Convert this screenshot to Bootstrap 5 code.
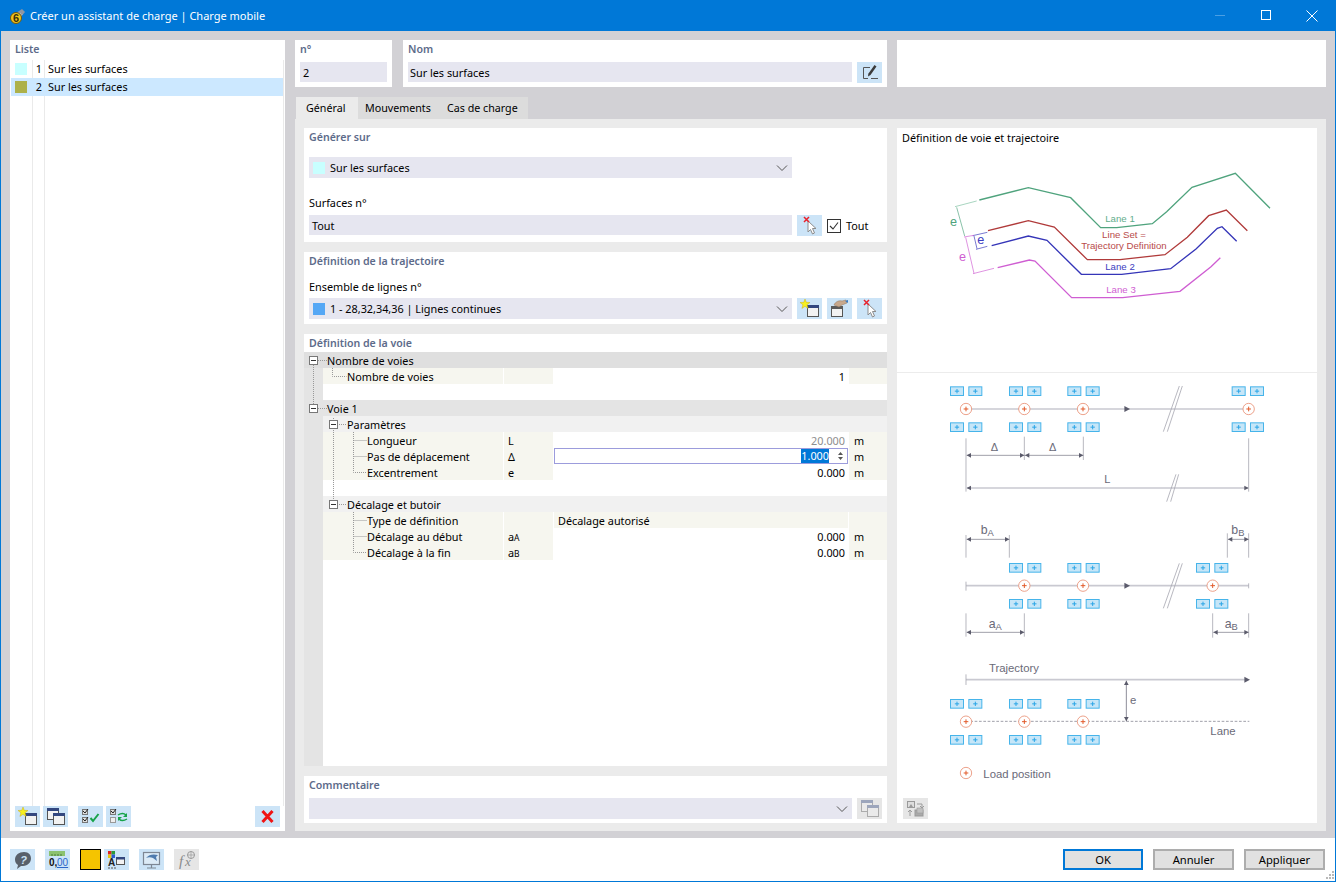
<!DOCTYPE html>
<html lang="fr">
<head>
<meta charset="utf-8">
<title>Créer un assistant de charge | Charge mobile</title>
<link href="https://cdn.jsdelivr.net/npm/bootstrap@5.3.0/dist/css/bootstrap.min.css" rel="stylesheet">
<style>
html,body{height:100%;margin:0;overflow:hidden}
body{font-family:"Noto Sans","Open Sans",sans-serif;font-size:10.85px;line-height:16px;color:#000;background:#fff}
.win{width:1336px;height:882px;border:solid #0078d7;border-width:0 1px 1px 1px}
.tbar{height:31px;background:#0078d7;color:#fff;font-size:11px;padding:0 1px 0 9px;margin:0 -1px}
.tbar .wctl{width:46px;height:31px}
.mainarea{background:#d2d1d5;padding:9px 9px 7px;gap:10px;height:807px}
.leftp{width:275px;background:#fff}
.ptitle{height:18px;line-height:18px;padding-left:5px;color:#5d6b8a;font-weight:600;font-size:10.6px}
.listbody{flex:1;min-height:0;margin-top:2px}
.lrow{height:18px;line-height:18px}
.lrow.sel{background:#cce8ff}
.lsw{width:12px;height:12px;margin:0 4px 0 4px}
.lcells{position:relative;margin-left:1px;margin-right:2px}
.lnum{width:10px;text-align:right;margin-right:3px;margin-left:1px}
.ltxt{margin-left:3px}
.vgrid{position:absolute;top:0;bottom:0;width:1px;background:#eaeaea}
.ltools{height:21px;margin:0 5px 4px 5px}
.rightc{width:1031px}
.toprow{height:47px;gap:10px}
.topn{width:97px;background:#fff;margin-right:1px}
.topnom{width:484px;background:#fff}
.topx{flex:1;background:#fff}
.fld{background:#e6e6f0;height:20px;line-height:21px;padding:0 3px;border:0;border-radius:0;color:#000}
.sel-fld{background-color:#e6e6f0;height:21px;line-height:21px;padding:0 4px;border:0;border-radius:0;font-size:10.85px;color:#000;background-image:url("data:image/svg+xml,%3csvg xmlns='http://www.w3.org/2000/svg' viewBox='0 0 14 10'%3e%3cpath fill='none' stroke='%23555' d='M2 2.500l5 5 5-5'/%3e%3c/svg%3e");background-position:right 3px center;background-size:14px 10px}
.tabsrow{margin-top:10px;height:22px;border:0;padding-left:1px;flex-wrap:nowrap}
.tabsrow .nav-link{height:22px;line-height:22px;padding:0 8px;border:0;border-radius:0;color:#000;background:#dcdcdc;font-size:10.7px;margin:0}
.tabsrow .nav-link.active{background:#ebebeb;color:#000}
.tabsep{border-left:1px solid #ebebeb}
.tabpane{background:#ebebeb;height:712px;padding:9px 9px 8px;gap:10px}
.colL{width:583px;gap:10px}
.whp{background:#fff}
.pbody{padding:0 5px}
.btnI{width:25px;height:21px;padding:0;border:0;border-radius:0;background:#cce4f7;display:block;flex:none}
.btnI.off{background:#e6e6e6}
.btnI svg{display:block}
.lab{height:16px;line-height:16px}
.mt-a{margin-top:11px}.mt-b{margin-top:17px}.mt-c{margin-top:4px}.mt-d{margin-top:9px}.mt-e{margin-top:3px}
.gap5{margin-left:5px}
.w483{width:483px;flex:none}
.chk{width:14px;height:14px;border:1px solid #333;background:#fff;margin-left:5px;flex:none}
.chklab{margin-left:5px}
.gen{height:114px}.traj{height:72px}.voie{height:432px}.comm{height:47px}
.tree{position:relative;flex:1;background:linear-gradient(to right,#e4e4e4 19px,#fff 19px)}
.trow{display:grid;grid-template-columns:19px 181px 50px 294px 39px;height:16px;line-height:18px}
.trow>div{white-space:nowrap;overflow:hidden}
.thead1{background:#dfdfdf}
.thead1b{background:#e4e4e4}
.thead2>.ca{background:#f1f1f1;grid-column:2 / 6;padding-left:24px}
.thead1 .ca,.thead1b .ca{grid-column:2 / 6;padding-left:4px}
.c1{background:#f6f6ef;border-right:1px solid #fff}
.c2{background:#f6f6ef;border-right:1px solid #fff;padding-left:4px}
.c3{padding:0 3px;text-align:right;background:#fff;position:relative}
.c3.txt{text-align:left;padding-left:4px;background:#f6f6ef}
.c4{background:#f6f6ef;border-left:1px solid #fff;padding-left:5px}
.lv1{padding-left:24px}.lv2{padding-left:44px}
.dim{color:#8e8e8e}
.edit{outline:1px solid #9c9cdc;outline-offset:-1px;padding-right:19px;line-height:16px}
.hl{background:#0078d7;color:#fff;display:inline-block;height:14px;line-height:14px;margin-top:1px}
.spin{position:absolute;right:4px;top:3px}
.sub{font-size:8.5px}
.treelines{position:absolute;left:0;top:0;pointer-events:none}
.colR{width:420px}
.diag{display:block;width:420px;height:650px;flex:none}
.diag text{font-family:"Liberation Sans",sans-serif}
.titleR{height:20px;line-height:20px;padding-left:5px}
.footbar{height:42px;background:#fff;padding:0 10px 0 9px;position:relative}
.dbtn{height:21px;line-height:17px;width:81px;background:#e1e1e1;border:2px solid #adadad;border-radius:0;font-size:11.2px;padding:0;color:#000}
.dbtn.def{border-color:#0078d7;width:80px}
.yelbox{width:21px;height:21px;background:#f5c400;border:1px solid #000;flex:none}
.grip{position:absolute;right:1px;bottom:1px}
</style>
</head>
<body>
<svg width="0" height="0" style="position:absolute">
<defs>
<symbol id="star" viewBox="0 0 12 12"><path d="M6 0l1.500 4 4.500.2-3.500 2.700 1.200 4.400L6 8.800 2.300 11.300l1.200-4.400L0 4.200 4.500 4z" fill="#f7f01e" stroke="#c9a400" stroke-width=".5"/></symbol>
<symbol id="i-new" viewBox="0 0 25 21"><rect x="10.500" y="7.500" width="11" height="11" fill="#f2f2f2" stroke="#555"/><rect x="10" y="7" width="12" height="3" fill="#33477f"/><use href="#star" x="3" y="1" width="10" height="10"/></symbol>
<symbol id="i-copy" viewBox="0 0 25 21"><rect x="4.500" y="2.500" width="11" height="11" fill="#f2f2f2" stroke="#555"/><rect x="4" y="2" width="12" height="3" fill="#33477f"/><rect x="10.500" y="7.500" width="11" height="11" fill="#f2f2f2" stroke="#555"/><rect x="10" y="7" width="12" height="3" fill="#33477f"/></symbol>
<symbol id="i-chk" viewBox="0 0 25 21"><rect x="4.500" y="3.500" width="5" height="5" fill="#ddd" stroke="#777"/><path d="M5 5l2 2 3-4" fill="none" stroke="#222"/><rect x="4.500" y="11.500" width="5" height="5" fill="#ddd" stroke="#777"/><path d="M5 13l2 2 3-4" fill="none" stroke="#222"/><path d="M12.500 12l2.500 3 5.500-7" fill="none" stroke="#17a34a" stroke-width="2"/></symbol>
<symbol id="i-tog" viewBox="0 0 25 21"><rect x="4.500" y="3.500" width="5" height="5" fill="#ddd" stroke="#777"/><path d="M5 5l2 2 3-4" fill="none" stroke="#222"/><rect x="4.500" y="11.500" width="5" height="5" fill="#eee" stroke="#999"/><path d="M12 9c3-2 6-2 8 0" fill="none" stroke="#17a34a" stroke-width="1.500"/><path d="M21 7v4h-4z" fill="#17a34a"/><path d="M21 13c-3 2-6 2-8 0" fill="none" stroke="#17a34a" stroke-width="1.500"/><path d="M12 15v-4h4z" fill="#17a34a"/></symbol>
<symbol id="i-x" viewBox="0 0 25 21"><path d="M7.500 5l10 11M17.500 5l-10 11" stroke="#f01414" stroke-width="3" fill="none"/></symbol>
<symbol id="i-pick" viewBox="0 0 25 21"><path d="M11 6v11l2.500-2.500 2 4.500 2-1-2-4.500h3.500z" fill="#fff" stroke="#8c8c8c"/><path d="M7 2l5 5M12 2l-5 5" stroke="#e8202a" stroke-width="1.500"/></symbol>
<symbol id="i-wpick" viewBox="0 0 25 21"><rect x="4.500" y="8.500" width="11" height="10" fill="#f2f2f2" stroke="#555"/><rect x="4" y="8" width="12" height="3" fill="#5b5b5b"/><path d="M7 7c1-3 5-5 8-4l4-1 1 3-5 2-3 2z" fill="#c8a88c" stroke="#8e7660" stroke-width=".5"/><path d="M18 3l3-1v3z" fill="#3a7cc4"/></symbol>
<symbol id="i-edit" viewBox="0 0 25 21"><path d="M13 5.500H6.500V16.500H11M14 16.500h7" fill="none" stroke="#555"/><path d="M17.500 3l2 1.500L13.500 13l-2.500 1.500.3-2.800z" fill="#3b3b3b"/></symbol>
<symbol id="i-help" viewBox="0 0 25 21"><path d="M14 3c5 0 7 3 7 6.500S18 17 13 17h-2l-4 3 1-4c-2-1-3-3-3-5.500C5 6 9 3 14 3z" fill="#58606b"/><text x="13.500" y="14.500" text-anchor="middle" font-family="Liberation Sans" font-weight="700" font-style="italic" font-size="11" fill="#cce4f7">?</text></symbol>
<symbol id="i-num" viewBox="0 0 25 21"><rect x="4" y="2" width="16" height="5" fill="#8cc26f"/><path d="M7 5v2M10 5v2M13 5v2M16 5v2" stroke="#4b7a3a"/><text x="4" y="17" font-family="Liberation Sans" font-weight="700" font-size="10" fill="#111">0,</text><text x="12" y="17" font-family="Liberation Sans" font-size="10" fill="#2a66c8" text-decoration="underline">00</text></symbol>
<symbol id="i-col" viewBox="0 0 25 21"><rect x="4" y="2" width="3.500" height="3.500" fill="#d22"/><rect x="7.500" y="2" width="3.500" height="3.500" fill="#2b9a3a"/><rect x="4" y="5.500" width="3.500" height="3.500" fill="#e8c510"/><rect x="7.500" y="5.500" width="3.500" height="3.500" fill="#2b5bd0"/><text x="4" y="17" font-family="Liberation Sans" font-weight="700" font-size="10" fill="#222">A</text><path d="M4 19h2M7 19h2M10 19h2" stroke="#555"/><rect x="12.500" y="8.500" width="8" height="7" fill="#f2f2f2" stroke="#555"/><rect x="12" y="8" width="9" height="2.500" fill="#33477f"/></symbol>
<symbol id="i-mon" viewBox="0 0 25 21"><rect x="4.500" y="3.500" width="16" height="12" fill="#dcebf7" stroke="#7d8794" stroke-width="1.200"/><path d="M12.500 15.500v3M8 19h9" stroke="#7d8794" stroke-width="1.200"/><path d="M7 9c3-4 8-4 12-3l-2 2 1 4-4-3c-2-1-5-1-7 0z" fill="#4f7bae"/></symbol>
<symbol id="i-fx" viewBox="0 0 25 21"><text x="5" y="17" font-family="Liberation Serif" font-style="italic" font-size="15" fill="#8a8a8a">f</text><text x="11" y="17" font-family="Liberation Serif" font-style="italic" font-size="13" fill="#8a8a8a">x</text><circle cx="17" cy="6" r="3.500" fill="none" stroke="#9a9a9a"/><path d="M13.500 6h7M17 2.500v7" stroke="#9a9a9a" stroke-width=".7"/></symbol>
<symbol id="i-img" viewBox="0 0 25 21"><rect x="4.500" y="3.500" width="7" height="6" fill="#ddd" stroke="#999"/><path d="M6 9l2-3 2 3" fill="#999"/><path d="M14 6h5v3M17 8l2 2 2-2" fill="none" stroke="#9b9b9b"/><path d="M7 18v-5M5 14l2-2 2 2" fill="none" stroke="#9b9b9b"/><rect x="12" y="12" width="8" height="6" fill="#aaa" stroke="#999"/><rect x="14" y="10" width="6" height="5" fill="#c0c0c0" stroke="#999" stroke-width=".6"/></symbol>

<g id="bx"><rect x="1.500" y="1.500" width="39" height="26" fill="#c6e6f8" stroke="#46b4ea" stroke-width="3"/><path d="M21 8v13M14.500 14.500h13" stroke="#2aa5e6" stroke-width="3"/></g>
<g id="pair"><use href="#bx"/><use href="#bx" x="55"/></g>
<g id="stk1"><use href="#pair" x="-48" y="-68"/><use href="#pair" x="-48" y="40"/></g>
<g id="lp"><circle r="17" fill="#fff" stroke="#e88f74" stroke-width="2.500"/><path d="M0-7v14M-7 0h14" stroke="#e25a2a" stroke-width="3"/></g>
<g id="arR"><path d="M0 0l-13-7v14z" fill="#5b5b6b"/></g>
<g id="arL"><path d="M0 0l13-7v14z" fill="#5b5b6b"/></g>
</defs>
</svg>

<div class="win d-flex flex-column">
  <div class="tbar d-flex align-items-center">
    <svg width="16" height="16" viewBox="0 0 16 16" style="flex:none"><path d="M7 5l6-4 3 3-5 6z" fill="#8d96a3"/><path d="M9 7.500l3-2.500M10.500 9l3-3" stroke="#c4c9d0" stroke-width=".6"/><circle cx="7" cy="10" r="5.500" fill="#f0c419" stroke="#6b5510"/><text x="7" y="14" text-anchor="middle" font-family="Liberation Sans" font-weight="700" font-size="11" fill="#3a2f08">6</text></svg>
    <span class="flex-grow-1" style="margin-left:5px">Créer un assistant de charge | Charge mobile</span>
    <div class="wctl d-flex align-items-center justify-content-center"><svg width="11" height="11"><path d="M0 5.500h10" stroke="#4a9fe4"/></svg></div>
    <div class="wctl d-flex align-items-center justify-content-center"><svg width="11" height="11"><rect x=".5" y=".5" width="9" height="9" fill="none" stroke="#fff"/></svg></div>
    <div class="wctl d-flex align-items-center justify-content-center"><svg width="12" height="12"><path d="M.5.500l11 11M11.500.500l-11 11" stroke="#fff"/></svg></div>
  </div>

  <div class="mainarea d-flex">
    <div class="leftp d-flex flex-column">
      <div class="ptitle">Liste</div>
      <div class="listbody lcells">
        <div class="vgrid" style="left:21px"></div><div class="vgrid" style="left:33px"></div><div class="vgrid" style="left:272px"></div>
        <div class="lrow d-flex align-items-center position-relative"><span class="lsw" style="background:#c8ffff"></span><span class="lnum">1</span><span class="ltxt">Sur les surfaces</span></div>
        <div class="lrow sel d-flex align-items-center position-relative"><span class="lsw" style="background:#adb14a"></span><span class="lnum">2</span><span class="ltxt">Sur les surfaces</span></div>
      </div>
      <div class="ltools d-flex position-relative">
        <button class="btnI"><svg width="25" height="21"><use href="#i-new"/></svg></button>
        <button class="btnI" style="margin-left:3px"><svg width="25" height="21"><use href="#i-copy"/></svg></button>
        <button class="btnI" style="margin-left:10px"><svg width="25" height="21"><use href="#i-chk"/></svg></button>
        <button class="btnI" style="margin-left:3px"><svg width="25" height="21"><use href="#i-tog"/></svg></button>
        <button class="btnI ms-auto"><svg width="25" height="21"><use href="#i-x"/></svg></button>
      </div>
    </div>

    <div class="rightc d-flex flex-column">
      <div class="toprow d-flex">
        <div class="topn">
          <div class="ptitle">n°</div>
          <div class="pbody mt-c"><div class="fld">2</div></div>
        </div>
        <div class="topnom">
          <div class="ptitle">Nom</div>
          <div class="pbody mt-c d-flex"><div class="fld flex-grow-1" style="padding-left:2px">Sur les surfaces</div><button class="btnI gap5"><svg width="25" height="21"><use href="#i-edit"/></svg></button></div>
        </div>
        <div class="topx"></div>
      </div>

      <ul class="nav nav-tabs tabsrow">
        <li class="nav-item"><a class="nav-link active" href="#" style="width:62px;padding-left:10px">Général</a></li>
        <li class="nav-item"><a class="nav-link" href="#" style="width:81px;padding-left:7px">Mouvements</a></li>
        <li class="nav-item"><a class="nav-link tabsep" href="#" style="width:89px">Cas de charge</a></li>
      </ul>

      <div class="tabpane d-flex">
        <div class="colL d-flex flex-column">
          <div class="whp gen">
            <div class="ptitle">Générer sur</div>
            <div class="pbody">
              <div class="form-select sel-fld w483 mt-a d-flex align-items-center"><span class="lsw m-0" style="background:#c8ffff;margin-right:5px!important"></span>Sur les surfaces</div>
              <div class="lab mt-b">Surfaces n°</div>
              <div class="d-flex align-items-center mt-c">
                <div class="fld w483 align-self-start">Tout</div>
                <button class="btnI gap5"><svg width="25" height="21"><use href="#i-pick"/></svg></button>
                <span class="chk d-flex align-items-center justify-content-center"><svg width="12" height="12"><path d="M2 6l3 3 5-6.500" fill="none" stroke="#333" stroke-width="1.100"/></svg></span>
                <span class="chklab">Tout</span>
              </div>
            </div>
          </div>

          <div class="whp traj">
            <div class="ptitle">Définition de la trajectoire</div>
            <div class="pbody">
              <div class="lab mt-d">Ensemble de lignes n°</div>
              <div class="d-flex mt-e">
                <div class="form-select sel-fld w483 d-flex align-items-center"><span class="lsw m-0" style="background:#55a7f5;margin-right:5px!important"></span>1 - 28,32,34,36 | Lignes continues</div>
                <button class="btnI gap5"><svg width="25" height="21"><use href="#i-new"/></svg></button>
                <button class="btnI gap5"><svg width="25" height="21"><use href="#i-wpick"/></svg></button>
                <button class="btnI gap5"><svg width="25" height="21"><use href="#i-pick"/></svg></button>
              </div>
            </div>
          </div>

          <div class="whp voie d-flex flex-column">
            <div class="ptitle">Définition de la voie</div>
            <div class="tree">
              <div class="trow thead1"><div></div><div class="ca">Nombre de voies</div></div>
              <div class="trow"><div></div><div class="c1 lv1">Nombre de voies</div><div class="c2"></div><div class="c3">1</div><div class="c4"></div></div>
              <div class="trow"></div>
              <div class="trow thead1b"><div></div><div class="ca">Voie 1</div></div>
              <div class="trow thead2"><div></div><div class="ca">Paramètres</div></div>
              <div class="trow"><div></div><div class="c1 lv2">Longueur</div><div class="c2">L</div><div class="c3 dim">20.000</div><div class="c4">m</div></div>
              <div class="trow"><div></div><div class="c1 lv2">Pas de déplacement</div><div class="c2">Δ</div><div class="c3 edit"><span class="hl">1.000</span><svg class="spin" width="7" height="10"><path d="M3.500 1l2.500 3h-5zM3.500 9l2.500-3h-5z" fill="#555"/></svg></div><div class="c4">m</div></div>
              <div class="trow"><div></div><div class="c1 lv2">Excentrement</div><div class="c2">e</div><div class="c3">0.000</div><div class="c4">m</div></div>
              <div class="trow"></div>
              <div class="trow thead2"><div></div><div class="ca">Décalage et butoir</div></div>
              <div class="trow"><div></div><div class="c1 lv2">Type de définition</div><div class="c2"></div><div class="c3 txt">Décalage autorisé</div><div class="c4"></div></div>
              <div class="trow"><div></div><div class="c1 lv2">Décalage au début</div><div class="c2">a<span class="sub">A</span></div><div class="c3">0.000</div><div class="c4">m</div></div>
              <div class="trow"><div></div><div class="c1 lv2">Décalage à la fin</div><div class="c2">a<span class="sub">B</span></div><div class="c3">0.000</div><div class="c4">m</div></div>
              <svg class="treelines" width="64" height="210" viewBox="304 352 64 210">
                <g fill="none" stroke="#999" stroke-dasharray="1 1">
                  <path d="M313.500 365v39M318 360.500h9M318 408.500h9M332.500 368v8.500h14M333.500 418v82M339 424.500h8M339 504.500h8M353.500 432v40.500h13M353.500 440.500h13M353.500 456.500h13M353.500 512v40.500h13M353.500 520.500h13M353.500 536.500h13"/>
                </g>
                <g fill="#fff" stroke="#777">
                  <rect x="309.500" y="356.500" width="8" height="8"/><rect x="309.500" y="404.500" width="8" height="8"/>
                  <rect x="329.500" y="420.500" width="8" height="8"/><rect x="329.500" y="500.500" width="8" height="8"/>
                </g>
                <path d="M311 360.500h5M311 408.500h5M331 424.500h5M331 504.500h5" stroke="#333"/>
              </svg>
            </div>
          </div>

          <div class="whp comm">
            <div class="ptitle">Commentaire</div>
            <div class="pbody d-flex mt-c">
              <div class="form-select sel-fld flex-grow-1"></div>
              <button class="btnI off gap5"><svg width="25" height="21"><use href="#i-copy" opacity=".4"/></svg></button>
            </div>
          </div>
        </div>

        <div class="colR whp d-flex flex-column">
          <div class="titleR">Définition de voie et trajectoire</div>
          <svg class="diag" viewBox="897 148 420 650" xmlns="http://www.w3.org/2000/svg">
            <path d="M897 372.500h420" stroke="#ececec"/>
            <g transform="translate(900 150) scale(.33333)" fill="none" font-size="29">
              <path d="M238 150L385 113L512 143L602 233L650 233L757 221L800 185L876 112L1006 70L1110 175" stroke="#4fa37d" stroke-width="4"/>
              <path d="M264 242L385 212L463 231L562 329L660 329L795 314L862 262L926 197L979 180L1042 242" stroke="#b03a3a" stroke-width="4"/>
              <path d="M275 287L385 258L441 271L544 373L665 373L812 356L888 297L952 235L966 230L1010 274" stroke="#3535b8" stroke-width="4"/>
              <path d="M293 353L388 330L405 333L515 443L668 443L840 424L933 350L961 323" stroke="#cf5ed2" stroke-width="4"/>
              <path d="M165 170L230 153" stroke="#7cc0a0" stroke-width="2"/><path d="M170 172L194 258" stroke="#4fa37d" stroke-width="2"/>
              <path d="M218 257L262 247M228 298L262 289M222 258L231 296" stroke="#3535b8" stroke-width="2"/>
              <path d="M192 261L222 256M219 371L282 355M197 262L222 370" stroke="#cf5ed2" stroke-width="2"/>
              <g stroke="none" font-family="Liberation Sans">
                <text x="660" y="216" text-anchor="middle" fill="#62ad8b">Lane 1</text>
                <text x="672" y="264" text-anchor="middle" fill="#b84a4a">Line Set =</text>
                <text x="672" y="297" text-anchor="middle" fill="#b84a4a">Trajectory Definition</text>
                <text x="660" y="360" text-anchor="middle" fill="#3c3cc0">Lane 2</text>
                <text x="663" y="428" text-anchor="middle" fill="#cf5ed2">Lane 3</text>
                <text x="150" y="229" font-size="38" fill="#4fa37d">e</text>
                <text x="232" y="283" font-size="38" fill="#3c3cc0">e</text>
                <text x="177" y="332" font-size="38" fill="#cf5ed2">e</text>
              </g>
            </g>

            <g transform="translate(900 375) scale(.33333)" font-family="Liberation Sans" fill="#6a6a78" font-size="33">
              <path d="M198 102H1046" stroke="#c9c9d1" stroke-width="5"/>
              <use href="#arR" transform="translate(690 102) scale(1.300)"/>
              <path d="M847 33L802 170M838 33L790 170" stroke="#a9a9b3" stroke-width="2.500" fill="#fff"/>
              <use href="#stk1" x="198" y="102"/><use href="#stk1" x="375" y="102"/><use href="#stk1" x="550" y="102"/><use href="#stk1" x="1043" y="102"/>
              <use href="#lp" x="198" y="102"/><use href="#lp" x="373" y="102"/><use href="#lp" x="549" y="102"/><use href="#lp" x="1046" y="102"/>
              <path d="M198 190V350M373 185V255M550 185V255M1046 190V350" stroke="#a9a9b3" stroke-width="2.500"/>
              <path d="M200 241H550" stroke="#8d8d99" stroke-width="2.500"/>
              <path d="M200 339H1046" stroke="#c9c9d1" stroke-width="5"/>
              <path d="M836 298L812 380M828 298L800 380" stroke="#a9a9b3" stroke-width="2.500"/>
              <use href="#arL" x="200" y="241"/><use href="#arR" x="373" y="241"/><use href="#arL" x="375" y="241"/><use href="#arR" x="550" y="241"/>
              <use href="#arL" x="200" y="339"/><use href="#arR" x="1046" y="339"/>
              <text x="272" y="229">Δ</text><text x="447" y="229">Δ</text><text x="613" y="325">L</text>
            </g>

            <g transform="translate(900 515) scale(.33333)" font-family="Liberation Sans" fill="#6a6a78" font-size="37">
              <path d="M198 212H1046" stroke="#c9c9d1" stroke-width="5"/>
              <path d="M198 200V227M1046 205V220" stroke="#a9a9b3" stroke-width="2.500"/>
              <use href="#arR" transform="translate(690 212) scale(1.300)"/>
              <path d="M847 145L802 280M838 145L790 280" stroke="#a9a9b3" stroke-width="2.500"/>
              <use href="#stk1" x="375" y="212"/><use href="#stk1" x="550" y="212"/><use href="#stk1" x="936" y="212"/>
              <use href="#lp" x="373" y="212"/><use href="#lp" x="549" y="212"/><use href="#lp" x="938" y="212"/>
              <path d="M198 60V128M328 60V128M982 55V128M1046 55V128M198 295V365M373 295V365M938 295V368M1046 295V368" stroke="#a9a9b3" stroke-width="2.500"/>
              <path d="M200 73H328M984 73H1046M200 352H373M940 352H1046" stroke="#8d8d99" stroke-width="2.500"/>
              <use href="#arL" x="200" y="73"/><use href="#arR" x="328" y="73"/><use href="#arL" x="984" y="73"/><use href="#arR" x="1046" y="73"/>
              <use href="#arL" x="200" y="352"/><use href="#arR" x="373" y="352"/><use href="#arL" x="940" y="352"/><use href="#arR" x="1046" y="352"/>
              <text x="242" y="56">b<tspan font-size="28" dy="6">A</tspan></text>
              <text x="994" y="56">b<tspan font-size="28" dy="6">B</tspan></text>
              <text x="266" y="338">a<tspan font-size="28" dy="6">A</tspan></text>
              <text x="974" y="338">a<tspan font-size="28" dy="6">B</tspan></text>
            </g>

            <g transform="translate(900 650) scale(.33333)" font-family="Liberation Sans" fill="#6a6a78" font-size="34">
              <path d="M198 89H1036" stroke="#c9c9d1" stroke-width="5"/><path d="M198 73V105" stroke="#a9a9b3" stroke-width="2.500"/>
              <use href="#arR" transform="translate(1050 89) scale(1.300)"/>
              <path d="M198 214H1048" stroke="#8d8d99" stroke-width="2.500" stroke-dasharray="8 5"/>
              <use href="#stk1" x="198" y="215"/><use href="#stk1" x="375" y="215"/><use href="#stk1" x="550" y="215"/>
              <use href="#lp" x="198" y="215"/><use href="#lp" x="373" y="215"/><use href="#lp" x="549" y="215"/>
              <path d="M679 92V214" stroke="#8d8d99" stroke-width="3"/>
              <path d="M679 92l-7 13h14zM679 214l-7-13h14z" fill="#5b5b6b"/>
              <text x="267" y="65">Trajectory</text>
              <text x="690" y="161">e</text>
              <text x="931" y="254">Lane</text>
              <use href="#lp" x="198" y="369"/>
              <text x="250" y="385">Load position</text>
            </g>
          </svg>
          <button class="btnI off" style="margin-left:6px"><svg width="25" height="21"><use href="#i-img"/></svg></button>
        </div>
      </div>
    </div>
  </div>

  <div class="footbar d-flex align-items-center">
    <button class="btnI"><svg width="25" height="21"><use href="#i-help"/></svg></button>
    <button class="btnI" style="margin-left:10px"><svg width="25" height="21"><use href="#i-num"/></svg></button>
    <span class="yelbox d-block" style="margin-left:10px"></span>
    <button class="btnI" style="margin-left:3px"><svg width="25" height="21"><use href="#i-col"/></svg></button>
    <button class="btnI" style="margin-left:10px"><svg width="25" height="21"><use href="#i-mon"/></svg></button>
    <button class="btnI off" style="margin-left:10px"><svg width="25" height="21"><use href="#i-fx"/></svg></button>
    <button class="btn dbtn def ms-auto">OK</button>
    <button class="btn dbtn" style="margin-left:10px">Annuler</button>
    <button class="btn dbtn" style="margin-left:10px">Appliquer</button>
    <svg class="grip" width="8" height="8"><path d="M6 0h2v2H6zM3 3h2v2H3zM6 3h2v2H6zM0 6h2v2H0zM3 6h2v2H3zM6 6h2v2H6z" fill="#b9b9b9"/></svg>
  </div>
</div>
<script src="https://cdn.jsdelivr.net/npm/bootstrap@5.3.0/dist/js/bootstrap.bundle.min.js"></script>
</body>
</html>
